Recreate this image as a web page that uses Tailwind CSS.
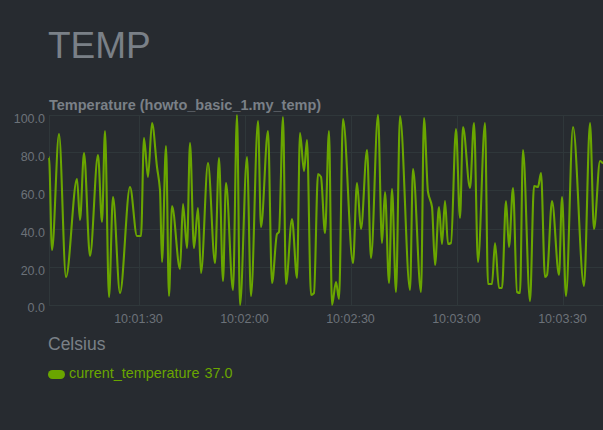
<!DOCTYPE html>
<html lang="en">
<head>
  <meta charset="UTF-8">
  <title>TEMP</title>
  <script src="https://cdn.jsdelivr.net/npm/@tailwindcss/browser@4"></script>
</head>
<body class="w-[603px] h-[430px] overflow-hidden bg-[#272b30] font-['Liberation_Sans',Arial,sans-serif]">
  <h1 class="pl-[48px] pt-[24px] text-[37px] leading-[44px] font-normal text-[#7a8087]">TEMP</h1>

  <div class="mt-[30px]">
    <div class="pl-[49px] h-[15px] text-[14.5px] leading-[15px] font-bold text-[#7a8087]">Temperature (howto_basic_1.my_temp)</div>
    <svg class="block mt-[-17px]" width="603" height="234" viewBox="0 96 603 234" font-size="12.5" fill="#6c7279">
      <!-- grid -->
      <g stroke="#2f373a" stroke-width="1" fill="none" shape-rendering="crispEdges">
        <path d="M49 115.5H603M49 152.5H603M49 190.5H603M49 229.5H603M49 267.5H603M49 305.5H603"/>
        <path d="M49.5 115V305M139.5 115V305M245.5 115V305M351.5 115V305M457.5 115V305M563.5 115V305"/>
      </g>
      <!-- y axis -->
      <g text-anchor="end">
        <text x="45" y="123">100.0</text>
        <text x="45" y="161">80.0</text>
        <text x="45" y="199">60.0</text>
        <text x="45" y="237">40.0</text>
        <text x="45" y="275">20.0</text>
        <text x="45" y="312">0.0</text>
      </g>
      <!-- x axis -->
      <g text-anchor="middle">
        <text x="138.5" y="323">10:01:30</text>
        <text x="244.5" y="323">10:02:00</text>
        <text x="350.5" y="323">10:02:30</text>
        <text x="456.5" y="323">10:03:00</text>
        <text x="562.5" y="323">10:03:30</text>
      </g>
      <path id="line" fill="none" stroke="#6aa600" stroke-width="2.1" stroke-linejoin="round"/>
    </svg>
  </div>

  <div class="mt-[4px] pl-[48px] text-[17.5px] leading-[20px] text-[#7a8087]">Celsius</div>
  <div class="mt-[11px] pl-[48px] flex items-center h-[18px] text-[14.4px] text-[#6aa600]">
    <span class="w-[17px] h-[9px] rounded-full bg-[#6aa600]"></span>
    <span class="ml-[4px]">current_temperature</span>
    <span class="ml-[5px]">37.0</span>
  </div>

  <script>
    // x,y pairs read off the chart, in page pixels
    const pts = [
      [49,157],[52,250],[59,134],[66,277],[77,179],[80,220],[84,153],[90,256],[98,155],[102,222],
      [105,131],[109,297],[113,197],[120,293],[130,187],[137,236],[141,236],[144,138],[148,177],[152,123],
      [157,167],[160,190],[162,262],[166,146],[169,296],[172,206],[180,269],[183,204],[187,248],[190,143],
      [194,248],[198,208],[201,273],[208,163],[215,263],[219,158],[223,281],[226,183],[233,290],[237,115],
      [240,305],[247,157],[251,296],[258,121],[261,227],[268,131],[272,283],[277,234],[279,232],[283,117],
      [286,284],[292,219],[297,278],[300,133],[304,171],[307,140],[311,295],[314,293],[318,174],[321,177],
      [325,233],[329,131],[332,305],[336,282],[339,299],[343,119],[353,263],[357,183],[361,229],[367,150],
      [371,258],[378,115],[382,243],[385,192],[389,283],[392,189],[396,292],[400,116],[410,290],[413,169],
      [421,292],[424,118],[428,192],[432,207],[435,265],[439,207],[442,244],[445,201],[448,244],[451,243],
      [456,129],[460,218],[463,127],[470,188],[474,123],[478,262],[485,123],[488,284],[492,284],[495,243],
      [499,288],[502,288],[506,201],[509,247],[513,188],[517,292],[520,293],[523,150],[530,301],[534,186],
      [538,187],[541,173],[545,277],[547,275],[552,201],[559,275],[562,197],[566,296],[573,127],[584,286],
      [590,123],[594,229],[600,161],[603,163]
    ];

    // monotone cubic so peaks don't overshoot
    const n = pts.length, tan = [];
    for (let i = 0; i < n; i++) {
      if (i === 0 || i === n - 1) { tan.push(0); continue; }
      const a = (pts[i][1] - pts[i-1][1]) / (pts[i][0] - pts[i-1][0]);
      const b = (pts[i+1][1] - pts[i][1]) / (pts[i+1][0] - pts[i][0]);
      tan.push(a * b <= 0 ? 0 : 2 * a * b / (a + b));
    }
    let d = `M${pts[0][0]} ${pts[0][1]}`;
    for (let i = 1; i < n; i++) {
      const [x0, y0] = pts[i-1], [x1, y1] = pts[i], h = (x1 - x0) / 3;
      d += `C${x0 + h} ${y0 + tan[i-1] * h} ${x1 - h} ${y1 - tan[i] * h} ${x1} ${y1}`;
    }
    document.getElementById('line').setAttribute('d', d);
  </script>
</body>
</html>
